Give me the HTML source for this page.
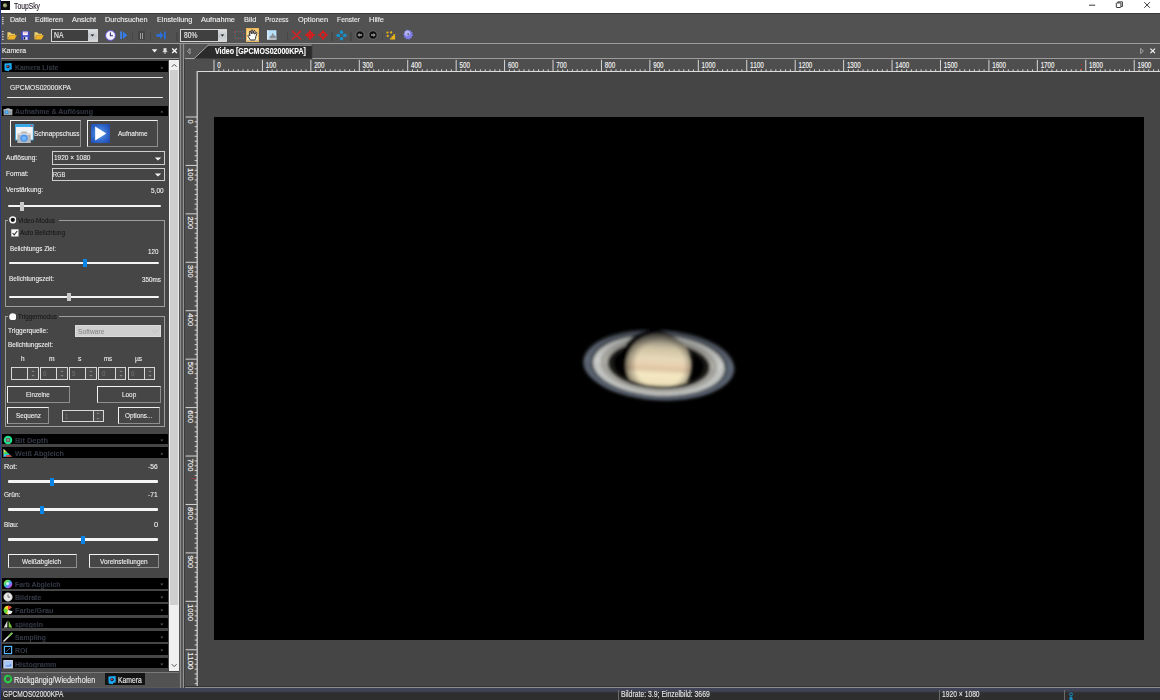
<!DOCTYPE html>
<html lang="de">
<head>
<meta charset="utf-8">
<title>ToupSky</title>
<style>
html,body{margin:0;padding:0;width:1160px;height:700px;overflow:hidden;background:#464646;}
body{font-family:"Liberation Sans",sans-serif;font-size:7.6px;color:#f2f2f2;}
#app{position:relative;width:1160px;height:700px;overflow:hidden;background:#464646;}
#app div,#app svg,#app span{position:absolute;box-sizing:border-box;}
.t{white-space:nowrap;line-height:1;transform-origin:0 50%;font-size:7.6px;-webkit-text-stroke:0.1px currentColor;}
.titlebar{background:#fff;}
.chrome{background:#525252;}
.hl{background:#9c9c9c;}
.sec{background:#000;}
.btn{border:1px solid;border-color:#f2f2f2 #8e8e8e #8e8e8e #f2f2f2;background:#464646;}
.combo{border:1px solid #cfcfcf;background:#454545;}
.track{background:#f4f4f4;border-radius:1px;}
.thumb{background:#0a84e6;}
.thumb.g{background:#c9c9c9;}
.grp{border:1.3px solid #9e9e9e;}
.spin{border:1px solid #d8d8d8;background:#474747;}
.spin i{position:absolute;display:block;right:0;width:9.2px;border-left:1px solid #d8d8d8;background:#4c4c4c;}
.spin i.u{top:0;height:50%;border-bottom:1.4px solid #f2f2f2;}
.spin i.d{bottom:0;height:50%;}
.t.dk{-webkit-text-stroke:0;}

</style>
</head>
<body>
<div id="app">
<div class="titlebar" style="left:0px;top:0px;width:1160px;height:13px;"></div>
<svg style="left:1px;top:1px" width="9" height="9" viewBox="0 0 9 9"><rect width="9" height="9" fill="#0c0c0c"/><circle cx="4" cy="4.4" r="2.1" fill="#8f9a6a"/><circle cx="3.6" cy="4" r="1.1" fill="#b8c090"/></svg>
<span class="t" style="left:14px;top:2.1px;font-size:9px;color:#1c1420;transform:scaleX(0.753);">ToupSky</span>
<svg style="left:1080px;top:0" width="80" height="13" viewBox="0 0 80 13" fill="none" stroke="#222" stroke-width="0.9"><path d="M9 5.2h6.2"/><rect x="36.3" y="2.9" width="4.6" height="4.6" rx="0.6"/><path d="M37.8 2.9v-1h4.6v4.6h-1.2"/><path d="M64.3 2.2l5.6 5.6M69.9 2.2l-5.6 5.6"/></svg>
<div class="chrome" style="left:0px;top:13px;width:1160px;height:31px;"></div>
<div style="left:0px;top:13px;width:1160px;height:0.6px;background:#3a3a3a"></div>
<svg style="left:2px;top:16.8px" width="3" height="10" viewBox="0 0 3 10"><rect x="0" y="0" width="1.6" height="1.1" fill="#d0d0d0"/><rect x="0" y="2.05" width="1.6" height="1.1" fill="#d0d0d0"/><rect x="0" y="4.1" width="1.6" height="1.1" fill="#d0d0d0"/><rect x="0" y="6.15" width="1.6" height="1.1" fill="#d0d0d0"/></svg>
<svg style="left:2px;top:30.8px" width="3" height="10" viewBox="0 0 3 10"><rect x="0" y="0" width="1.6" height="1.1" fill="#d0d0d0"/><rect x="0" y="2.6" width="1.6" height="1.1" fill="#d0d0d0"/><rect x="0" y="5.2" width="1.6" height="1.1" fill="#d0d0d0"/><rect x="0" y="7.8" width="1.6" height="1.1" fill="#d0d0d0"/></svg>
<span class="t" style="left:9.6px;top:16.2px;font-size:8px;transform:scaleX(0.878);">Datei</span>
<span class="t" style="left:35px;top:16.2px;font-size:8px;transform:scaleX(0.887);">Editieren</span>
<span class="t" style="left:72px;top:16.2px;font-size:8px;transform:scaleX(0.915);">Ansicht</span>
<span class="t" style="left:105px;top:16.2px;font-size:8px;transform:scaleX(0.904);">Durchsuchen</span>
<span class="t" style="left:156.6px;top:16.2px;font-size:8px;transform:scaleX(0.904);">Einstellung</span>
<span class="t" style="left:201px;top:16.2px;font-size:8px;transform:scaleX(0.932);">Aufnahme</span>
<span class="t" style="left:243.6px;top:16.2px;font-size:8px;transform:scaleX(0.929);">Bild</span>
<span class="t" style="left:265px;top:16.2px;font-size:8px;transform:scaleX(0.816);">Prozess</span>
<span class="t" style="left:298px;top:16.2px;font-size:8px;transform:scaleX(0.924);">Optionen</span>
<span class="t" style="left:337px;top:16.2px;font-size:8px;transform:scaleX(0.848);">Fenster</span>
<span class="t" style="left:369.4px;top:16.2px;font-size:8px;transform:scaleX(0.937);">Hilfe</span>
<svg style="left:7px;top:31px" width="10" height="9" viewBox="0 0 10 9"><path d="M0.4 8.4V1.6h3l1 1.2h3.6v1.4H2.8L0.4 8.4z" fill="#e8c860"/><path d="M0.6 8.6l2.4-4.4h6.8L7.4 8.6z" fill="#f2b426"/><path d="M0.6 1.8h2.6l0.8 1" stroke="#fff2b0" stroke-width="0.5" fill="none"/></svg>
<svg style="left:21px;top:30.5px" width="9" height="9" viewBox="0 0 9 9"><rect x="0.2" y="0.2" width="8.4" height="8.6" rx="0.6" fill="#3f47c8"/><rect x="1.8" y="0.6" width="5" height="3.6" fill="#f4f4ff"/><rect x="2.4" y="1.6" width="3.6" height="0.6" fill="#e07070"/><rect x="2.4" y="5.8" width="4.2" height="3" fill="#d8dcf4"/><rect x="2.8" y="6.2" width="1.4" height="2.2" fill="#10102a"/></svg>
<svg style="left:33.6px;top:31px" width="10" height="9" viewBox="0 0 10 9"><path d="M0.4 8.4V1.6h3l1 1.2h3.6v1.4H2.8L0.4 8.4z" fill="#e8c860"/><path d="M0.6 8.6l2.4-4.4h6.8L7.4 8.6z" fill="#f2b426"/><path d="M0.6 1.8h2.6l0.8 1" stroke="#fff2b0" stroke-width="0.5" fill="none"/></svg>
<div class="combo" style="left:51px;top:29px;width:46.6px;height:13px;border-color:#d6d6d6;background:#404040"></div><div style="left:88.2px;top:30px;width:8.4px;height:11px;background:linear-gradient(#dcdfe2,#c2c6ca 50%,#d4d7da)"></div><svg style="left:90.2px;top:34px" width="5" height="4" viewBox="0 0 5 4"><path d="M0.6 0.6h3.6L2.4 2.6z" fill="#1a1a1a"/></svg><span class="t" style="left:54px;top:31.4px;font-size:8.4px;transform:scaleX(0.808);">NA</span>
<svg style="left:104.5px;top:30px" width="11" height="11" viewBox="0 0 11 11"><circle cx="5.5" cy="5.5" r="4.9" fill="#f4f2ff" stroke="#5a4ed0" stroke-width="1"/><path d="M5.4 2.6v3.2h2.6" stroke="#3a3470" stroke-width="1.1" fill="none"/></svg>
<svg style="left:119.6px;top:31px" width="8" height="9" viewBox="0 0 8 9"><rect x="0.2" y="0.4" width="1.8" height="7.6" fill="#3a86f0"/><path d="M3 0.4l4.2 3.8L3 8z" fill="#2f7df0"/></svg>
<div style="left:132px;top:31.5px;width:1.2px;height:9px;background:#474747"></div>
<div style="left:137.8px;top:31.4px;width:7.2px;height:8.4px;background:#454545"></div>
<div style="left:139.5px;top:32.8px;width:1.1px;height:5.8px;background:#9c9c9c"></div>
<div style="left:142.4px;top:32.8px;width:1.1px;height:5.8px;background:#9c9c9c"></div>
<div style="left:150px;top:31.5px;width:1.2px;height:9px;background:#474747"></div>
<svg style="left:156px;top:31px" width="10.4" height="9" viewBox="0 0 10.4 9"><path d="M0.4 3h3.6V0.8l3.6 3.6L4 8V5.8H0.4z" fill="#2a6fd8"/><rect x="8" y="0.4" width="1.8" height="8" fill="#2a6fd8"/></svg>
<div style="left:176.4px;top:31.5px;width:1.2px;height:9px;background:#474747"></div>
<div class="combo" style="left:180px;top:29px;width:47px;height:13px;border-color:#d6d6d6;background:#404040"></div><div style="left:217.6px;top:30px;width:8.4px;height:11px;background:linear-gradient(#dcdfe2,#c2c6ca 50%,#d4d7da)"></div><svg style="left:219.6px;top:34px" width="5" height="4" viewBox="0 0 5 4"><path d="M0.6 0.6h3.6L2.4 2.6z" fill="#1a1a1a"/></svg><span class="t" style="left:184px;top:31.4px;font-size:8.4px;transform:scaleX(0.799);">80%</span>
<svg style="left:233.6px;top:31.2px" width="10.4" height="8.4" viewBox="0 0 10.4 8.4"><g fill="none" stroke-width="1.1" stroke-dasharray="1.1 2.2" opacity="0.8"><rect x="0.8" y="0.8" width="8.8" height="6.6" stroke="#c44a3c"/><rect x="0.8" y="0.8" width="8.8" height="6.6" stroke="#1a86b4" stroke-dashoffset="1.65"/></g></svg>
<div style="left:245.8px;top:28.4px;width:13.4px;height:13.4px;background:linear-gradient(#f5c265,#fbe3a0 40%,#fdf1c4 90%,#9aa2b4);border:0.6px solid #f0b85c;"></div>
<svg style="left:247.2px;top:29.4px" width="11" height="11.6" viewBox="0 0 11 11.6"><path d="M3.400 11L1.300 7.700Q0.500 6.400 1.500 6 2.300 5.800 3 6.900L2.300 3.300Q2.200 2.400 2.900 2.300 3.600 2.200 3.800 3L4.300 4.800 4.200 1.800Q4.200 0.900 5 0.900 5.800 0.900 5.800 1.800L6 4.700 6.700 2.200Q6.900 1.400 7.600 1.600 8.300 1.800 8.100 2.600L7.700 5.200 8.800 3.700Q9.300 3.100 9.800 3.500 10.300 3.900 9.900 4.600L8.800 7.600Q8.600 9.600 7.800 11Z" fill="#fff" stroke="#141414" stroke-width="0.850" stroke-linejoin="round"/></svg>
<svg style="left:267px;top:30px" width="10" height="10" viewBox="0 0 10 10"><rect x="0.2" y="0.2" width="9.2" height="9.2" fill="#b9e0fb"/><path d="M2.6 9.2V6.4l2-1.2 1.2-2.8 1 2.6 2 1.2v3z" fill="#8a9098"/><rect x="0.2" y="8.4" width="9.2" height="1.2" fill="#d8dde0"/><rect x="0.2" y="0.2" width="1.2" height="9.2" fill="#dff1ff"/></svg>
<div style="left:287px;top:31.5px;width:1.2px;height:9px;background:#474747"></div>
<svg style="left:291px;top:30.2px" width="11" height="10" viewBox="0 0 11 10"><path d="M1.600 1.400l7.800 7.600M9.400 1.400l-7.800 7.600" stroke="#d22424" stroke-width="1.700" stroke-linecap="round"/></svg>
<svg style="left:304.6px;top:30.4px" width="10" height="10" viewBox="0 0 10 10"><g fill="none" stroke="#e21a1a"><circle cx="5" cy="5" r="2.700" stroke-width="1.200"/><path d="M0.200 5h9.600M5 0.200v9.600" stroke-width="1.300"/></g><path d="M5 0L6 1.800H4zM5 10L6 8.200H4zM0 5L1.800 4v2zM10 5L8.200 4v2z" fill="#e21a1a"/></svg>
<svg style="left:318.2px;top:30.4px" width="10" height="10" viewBox="0 0 10 10"><g fill="none" stroke="#e21a1a"><circle cx="5" cy="5" r="2.700" stroke-width="1.200"/><path d="M0.200 5h3.400M6.400 5h3.400M5 0.600v3M5 6.400v3" stroke-width="1.400"/></g><path d="M5 0.200L6.200 2H3.800zM5 9.800L6.200 8H3.800z" fill="#e21a1a"/></svg>
<div style="left:331.4px;top:31.5px;width:1.2px;height:9px;background:#474747"></div>
<svg style="left:336px;top:29.8px" width="11" height="11" viewBox="0 0 11 11"><g fill="#1592cc"><ellipse cx="5.500" cy="2.200" rx="1.700" ry="1.900"/><ellipse cx="5.500" cy="8.600" rx="1.700" ry="1.900"/><ellipse cx="2.200" cy="5.400" rx="1.900" ry="1.700"/><ellipse cx="8.800" cy="5.400" rx="1.900" ry="1.700"/></g></svg>
<div style="left:350.4px;top:31.5px;width:1.2px;height:9px;background:#474747"></div>
<svg style="left:354.6px;top:30.4px" width="10" height="10" viewBox="0 0 10 10"><circle cx="5" cy="5" r="4.200" fill="#0e0e0e" stroke="#7c7c7c" stroke-width="0.800"/><path d="M2.400 5l2.200-1.900v1.200h2.400v1.400H4.600v1.200z" fill="#9a9a9a"/></svg>
<svg style="left:368px;top:30.4px" width="10" height="10" viewBox="0 0 10 10"><circle cx="5" cy="5" r="4.200" fill="#0e0e0e" stroke="#7c7c7c" stroke-width="0.800"/><path d="M7.600 5L5.400 3.100v1.200H3v1.400h2.400v1.200z" fill="#9a9a9a"/></svg>
<div style="left:382px;top:31.5px;width:1.2px;height:9px;background:#474747"></div>
<svg style="left:386px;top:31.2px" width="10" height="9" viewBox="0 0 10 9"><g fill="#e6b414"><circle cx="1.500" cy="1.600" r="1.100"/><circle cx="5.100" cy="1.400" r="1.100"/><circle cx="1.700" cy="4.900" r="1.100"/><path d="M4.200 8.400V6.800h1.500V5h1.600V3.200h1.800v5.200z"/></g></svg>
<svg style="left:403.4px;top:29.4px" width="10.4" height="10.4" viewBox="0 0 10.4 10.4"><g transform="scale(0.945)"><path d="M5.500 0.400l1.100 1.500 1.800-.6.200 1.900 1.800.5-.8 1.700 1.200 1.400-1.600 1 .2 1.800-1.900.1-.8 1.700-1.600-1-1.700.8-.6-1.800-1.900-.3.5-1.800L0.200 5.600l1.500-1.200-.5-1.800 1.900-.3.600-1.800 1.700.8z" fill="#7f7de8"/><circle cx="4.600" cy="4.400" r="2.900" fill="#c4c4fa" opacity="0.750"/><circle cx="5.500" cy="5.500" r="1" fill="#66647a"/></g></svg>
<div class="hl" style="left:0px;top:43px;width:1160px;height:1px;"></div>
<div style="left:0px;top:44px;width:180px;height:14px;background:#464646"></div>
<span class="t" style="left:2px;top:46.7px;font-size:8px;transform:scaleX(0.857);">Kamera</span>
<svg style="left:150px;top:46px" width="30" height="10" viewBox="0 0 30 10"><path d="M1.800 3.300h5.600l-2.800 3.300z" fill="#f6f6f6"/><path d="M13.500 2.200h3v3.400h-3z" fill="#e4e4e4"/><path d="M12.700 5.700h4.600M15 5.700v2.300" fill="none" stroke="#e8e8e8" stroke-width="0.900"/><path d="M22.200 2.600l4.600 4.400M26.800 2.600l-4.600 4.400" stroke="#f8f8f8" stroke-width="1.400"/></svg>
<div class="hl" style="left:0px;top:58px;width:181px;height:1px;"></div>
<div style="left:1px;top:59px;width:179px;height:613px;background:#464646"></div>
<div class="sec" style="left:2px;top:61px;width:165.8px;height:11px;"></div><svg style="left:3.4px;top:61.8px" width="10" height="10" viewBox="0 0 10 10"><path d="M1.4 1.6L8.6 1l.2 6.4-2.400.4-.6 1.400-4.200-.6z" fill="#1ea8f2"/><circle cx="5" cy="4.600" r="1.700" fill="#1a1a2a"/><circle cx="4.800" cy="4.400" r="0.800" fill="#e04848"/></svg><span class="t" style="left:15px;top:64px;font-size:7.8px;color:#343844;font-weight:bold;transform:scaleX(0.886);">Kamera Liste</span><svg style="left:160px;top:65.9px" width="4" height="3" viewBox="0 0 4 3"><path d="M0.4 2.4h3L1.9 0.6z" fill="#5a5a5a"/></svg>
<div class="track" style="left:7px;top:76.8px;width:156px;height:1.4px;background:#e8e8e8"></div>
<span class="t" style="left:10px;top:84.1px;font-size:7.8px;color:#ececec;transform:scaleX(0.855);">GPCMOS02000KPA</span>
<div class="track" style="left:7px;top:96.8px;width:156px;height:1.4px;background:#e8e8e8"></div>
<div class="sec" style="left:2px;top:105.6px;width:165.8px;height:10.4px;"></div><svg style="left:3.4px;top:106.4px" width="10" height="10" viewBox="0 0 10 10"><path d="M0.6 3.400h2l.8-1.200h3.200l.8 1.200h2v5.800H0.600z" fill="#9aa0a6"/><rect x="0.600" y="3.400" width="8.800" height="1" fill="#c8ccd0"/><circle cx="3.600" cy="6.200" r="1.900" fill="#2a90e0"/><circle cx="3.600" cy="6.200" r="0.900" fill="#7cc4f8"/></svg><span class="t" style="left:15px;top:108.3px;font-size:7.8px;color:#343844;font-weight:bold;transform:scaleX(0.903);">Aufnahme &amp; Auflösung</span><svg style="left:160px;top:110.2px" width="4" height="3" viewBox="0 0 4 3"><path d="M0.4 2.4h3L1.9 0.6z" fill="#5a5a5a"/></svg>
<div class="btn" style="left:10px;top:120px;width:71px;height:27.4px;"></div>
<svg style="left:14.6px;top:124px" width="19" height="20" viewBox="0 0 19 20"><rect x="0.400" y="0.400" width="17.800" height="15.600" fill="#f4f4f4" stroke="#38a8e8" stroke-width="0.800"/><rect x="0.400" y="0.400" width="17.800" height="2.600" fill="#38a8e8"/><rect x="15.800" y="1" width="1.600" height="1.400" fill="#e84040"/><path d="M2.400 9.400h3l1.200-1.800h5l1.200 1.800h3v9.600H2.400z" fill="#b4b8bc"/><rect x="2.400" y="9.400" width="13.400" height="1.600" fill="#d8dadc"/><circle cx="9" cy="14.200" r="3.600" fill="#4a98f0"/><circle cx="9" cy="14.200" r="2" fill="#78b8ff"/></svg>
<span class="t" style="left:34px;top:130.3px;font-size:7.8px;transform:scaleX(0.828);">Schnappschuss</span>
<div class="btn" style="left:86.6px;top:120px;width:71.8px;height:27.4px;"></div>
<svg style="left:91px;top:124.4px" width="19.4" height="19" viewBox="0 0 19.4 19"><defs><radialGradient id="pg" cx="0.450" cy="0.500" r="0.750"><stop offset="0" stop-color="#5aa0ee"/><stop offset="0.600" stop-color="#2c62c8"/><stop offset="1" stop-color="#1c44a0"/></radialGradient></defs><rect width="19.400" height="19" fill="url(#pg)"/><path d="M4.200 2.600L15.400 9.500 4.200 16.400z" fill="#fff"/></svg>
<span class="t" style="left:118.4px;top:130.3px;font-size:7.8px;transform:scaleX(0.833);">Aufnahme</span>
<span class="t" style="left:6px;top:153.7px;font-size:7.8px;transform:scaleX(0.846);">Auflösung:</span>
<div class="combo" style="left:52px;top:151.2px;width:113px;height:13.6px;"></div><span class="t" style="left:54px;top:154.4px;font-size:7.8px;transform:scaleX(0.835);">1920 × 1080</span><svg style="left:154px;top:156.6px" width="8" height="4" viewBox="0 0 8 4"><path d="M0.800 0.400h6.400L4 3.600z" fill="#f6f6f6"/></svg>
<span class="t" style="left:6px;top:169.9px;font-size:7.8px;transform:scaleX(0.841);">Format:</span>
<div class="combo" style="left:52px;top:168px;width:113px;height:13.4px;"></div><span class="t" style="left:53px;top:171.1px;font-size:7.8px;transform:scaleX(0.722);">RGB</span><svg style="left:154px;top:173.3px" width="8" height="4" viewBox="0 0 8 4"><path d="M0.800 0.400h6.400L4 3.600z" fill="#f6f6f6"/></svg>
<span class="t" style="left:6px;top:185.9px;font-size:7.8px;transform:scaleX(0.845);">Verstärkung:</span>
<span class="t" style="left:151.4px;top:186.5px;font-size:7.8px;transform:scaleX(0.830);">5,00</span>
<div class="track" style="left:8px;top:204.7px;width:153.4px;height:2.6px;"></div><div class="thumb g" style="left:20px;top:201.5px;width:4px;height:9px;"></div>
<div class="grp" style="left:5px;top:220px;width:160.4px;height:86.8px;"></div>
<div style="left:8px;top:216px;width:50.6px;height:8px;background:#464646"></div>
<svg style="left:8.8px;top:216.2px" width="7.6" height="7.6" viewBox="0 0 7.6 7.6"><circle cx="3.8" cy="3.8" r="2.9" fill="#111" stroke="#f6f6f6" stroke-width="1.5"/></svg>
<span class="t dk" style="left:18.2px;top:216.5px;font-size:7.8px;color:#101010;transform:scaleX(0.803);">Video-Modus</span>
<svg style="left:10.6px;top:228.6px" width="8" height="8" viewBox="0 0 8 8"><rect x="0.300" y="0.300" width="7.200" height="7.200" fill="#f8f8f8"/><path d="M1.600 4l1.600 1.800 3-3.800" stroke="#333" stroke-width="1.100" fill="none"/></svg>
<span class="t dk" style="left:20px;top:228.7px;font-size:7.8px;color:#101010;transform:scaleX(0.824);">Auto Belichtung</span>
<span class="t" style="left:10px;top:244.9px;font-size:7.8px;transform:scaleX(0.804);">Belichtungs Ziel:</span>
<span class="t" style="left:147.6px;top:247.5px;font-size:7.8px;transform:scaleX(0.799);">120</span>
<div class="track" style="left:9.4px;top:261.5px;width:149.6px;height:2.6px;"></div><div class="thumb" style="left:83.2px;top:258.8px;width:4px;height:8px;"></div>
<span class="t" style="left:9px;top:274.7px;font-size:7.8px;transform:scaleX(0.824);">Belichtungszeit:</span>
<span class="t" style="left:142px;top:275.5px;font-size:7.8px;transform:scaleX(0.812);">350ms</span>
<div class="track" style="left:9.4px;top:295.5px;width:149.6px;height:2.6px;"></div><div class="thumb g" style="left:67px;top:292.6px;width:4px;height:8.4px;"></div>
<div class="grp" style="left:5px;top:316.4px;width:160.4px;height:110.6px;"></div>
<div style="left:8px;top:312px;width:51px;height:8px;background:#464646"></div>
<svg style="left:8.8px;top:312.6px" width="7.6" height="7.6" viewBox="0 0 7.6 7.6"><circle cx="3.8" cy="3.8" r="3.6" fill="#fbfbfb"/></svg>
<span class="t dk" style="left:18.2px;top:312.9px;font-size:7.8px;color:#101010;transform:scaleX(0.812);">Triggermodus</span>
<span class="t" style="left:8px;top:326.7px;font-size:7.8px;transform:scaleX(0.844);">Triggerquelle:</span>
<div style="left:75.4px;top:325px;width:85.6px;height:12.4px;background:#cfcfcf;border:1px solid #dcdcdc"></div>
<span class="t" style="left:77.6px;top:327.5px;font-size:7.8px;color:#8a8a8a;transform:scaleX(0.858);">Software</span>
<svg style="left:152.4px;top:328.6px" width="6.4" height="5" viewBox="0 0 6.4 5"><path d="M0.600 1l2.600 2.800L5.800 1" stroke="#bcbcbc" stroke-width="0.900" fill="none"/></svg>
<span class="t" style="left:8px;top:340.9px;font-size:7.8px;transform:scaleX(0.824);">Belichtungszeit:</span>
<span class="t" style="left:21.2px;top:354.5px;font-size:7.8px;transform:scaleX(0.829);">h</span>
<span class="t" style="left:48.6px;top:354.5px;font-size:7.8px;transform:scaleX(0.862);">m</span>
<span class="t" style="left:77.5px;top:354.5px;font-size:7.8px;transform:scaleX(0.870);">s</span>
<span class="t" style="left:103.9px;top:354.5px;font-size:7.8px;transform:scaleX(0.788);">ms</span>
<span class="t" style="left:134.8px;top:354.5px;font-size:7.8px;transform:scaleX(0.857);">µs</span>
<div class="spin" style="left:11px;top:367.4px;width:27.6px;height:12.4px;"><i class="u"></i><i class="d"></i></div><svg style="left:31.2px;top:369.8px" width="4" height="2" viewBox="0 0 4 2"><path d="M0.400 1.800h3.200L2 0.400z" fill="#9a9a9a"/></svg><svg style="left:31.2px;top:375.4px" width="4" height="2" viewBox="0 0 4 2"><path d="M0.400 0.200h3.200L2 1.600z" fill="#9a9a9a"/></svg>
<div class="spin" style="left:40px;top:367.4px;width:27.6px;height:12.4px;"><i class="u"></i><i class="d"></i></div><svg style="left:60.2px;top:369.8px" width="4" height="2" viewBox="0 0 4 2"><path d="M0.400 1.800h3.200L2 0.400z" fill="#9a9a9a"/></svg><svg style="left:60.2px;top:375.4px" width="4" height="2" viewBox="0 0 4 2"><path d="M0.400 0.200h3.200L2 1.600z" fill="#9a9a9a"/></svg><span class="t" style="left:43.2px;top:370.2px;font-size:7.2px;color:#707070;transform:scaleX(0.850);">0</span>
<div class="spin" style="left:69px;top:367.4px;width:27.6px;height:12.4px;"><i class="u"></i><i class="d"></i></div><svg style="left:89.2px;top:369.8px" width="4" height="2" viewBox="0 0 4 2"><path d="M0.400 1.800h3.200L2 0.400z" fill="#9a9a9a"/></svg><svg style="left:89.2px;top:375.4px" width="4" height="2" viewBox="0 0 4 2"><path d="M0.400 0.200h3.200L2 1.600z" fill="#9a9a9a"/></svg><span class="t" style="left:72.2px;top:370.2px;font-size:7.2px;color:#707070;transform:scaleX(0.850);">5</span>
<div class="spin" style="left:98.4px;top:367.4px;width:27.6px;height:12.4px;"><i class="u"></i><i class="d"></i></div><svg style="left:118.6px;top:369.8px" width="4" height="2" viewBox="0 0 4 2"><path d="M0.400 1.800h3.200L2 0.400z" fill="#9a9a9a"/></svg><svg style="left:118.6px;top:375.4px" width="4" height="2" viewBox="0 0 4 2"><path d="M0.400 0.200h3.200L2 1.600z" fill="#9a9a9a"/></svg><span class="t" style="left:101.6px;top:370.2px;font-size:7.2px;color:#707070;transform:scaleX(0.850);">0</span>
<div class="spin" style="left:127.8px;top:367.4px;width:27.6px;height:12.4px;"><i class="u"></i><i class="d"></i></div><svg style="left:148px;top:369.8px" width="4" height="2" viewBox="0 0 4 2"><path d="M0.400 1.800h3.200L2 0.400z" fill="#9a9a9a"/></svg><svg style="left:148px;top:375.4px" width="4" height="2" viewBox="0 0 4 2"><path d="M0.400 0.200h3.200L2 1.600z" fill="#9a9a9a"/></svg><span class="t" style="left:131px;top:370.2px;font-size:7.2px;color:#707070;transform:scaleX(0.850);">0</span>
<div class="btn" style="left:6.6px;top:386px;width:63px;height:16.8px;"></div>
<span class="t" style="left:26.4px;top:390.9px;font-size:7.8px;transform:scaleX(0.789);">Einzelne</span>
<div class="btn" style="left:97px;top:386px;width:63.6px;height:16.8px;"></div>
<span class="t" style="left:122.2px;top:390.9px;font-size:7.8px;transform:scaleX(0.818);">Loop</span>
<div class="btn" style="left:6.6px;top:407px;width:42.2px;height:16.8px;"></div>
<span class="t" style="left:16px;top:411.9px;font-size:7.8px;transform:scaleX(0.812);">Sequenz</span>
<div class="spin" style="left:62px;top:410px;width:41.8px;height:12.4px;"><i class="u"></i><i class="d"></i></div><svg style="left:96.4px;top:412.4px" width="4" height="2" viewBox="0 0 4 2"><path d="M0.400 1.800h3.200L2 0.400z" fill="#9a9a9a"/></svg><svg style="left:96.4px;top:418px" width="4" height="2" viewBox="0 0 4 2"><path d="M0.400 0.200h3.200L2 1.600z" fill="#9a9a9a"/></svg><span class="t" style="left:65.2px;top:412.8px;font-size:7.2px;color:#707070;transform:scaleX(0.850);">1</span>
<div class="btn" style="left:118px;top:407px;width:42.2px;height:16.8px;"></div>
<span class="t" style="left:125.2px;top:411.9px;font-size:7.8px;transform:scaleX(0.821);">Options...</span>
<div class="sec" style="left:2px;top:434px;width:165.8px;height:10.4px;"></div><svg style="left:3.4px;top:434.8px" width="10" height="10" viewBox="0 0 10 10"><circle cx="5" cy="5" r="4.300" fill="#20e088"/><rect x="3" y="3" width="4" height="4" fill="#6a6a6a"/><rect x="3.800" y="3.800" width="2.400" height="2.400" fill="#8a8a8a"/></svg><span class="t" style="left:15px;top:436.7px;font-size:7.8px;color:#343844;font-weight:bold;transform:scaleX(0.952);">Bit Depth</span><svg style="left:160px;top:438.6px" width="4" height="3" viewBox="0 0 4 3"><path d="M0.4 0.6h3L1.9 2.4z" fill="#5a5a5a"/></svg>
<div class="sec" style="left:2px;top:447.2px;width:165.8px;height:10.6px;"></div><svg style="left:3.4px;top:448px" width="10" height="10" viewBox="0 0 10 10"><path d="M0.800 1.200L9 8.800H0.800z" fill="#20c8f0"/><path d="M0.800 1.200l3 2.800H0.800z" fill="#f4e020"/><path d="M0.800 4l3.200.200 2 1.800H0.800z" fill="#40d840"/><path d="M3.400 7.200L7 7l2 1.800H2.400z" fill="#f03020"/><path d="M0.800 1v8" stroke="#eee" stroke-width="0.500"/></svg><span class="t" style="left:15px;top:450px;font-size:7.8px;color:#343844;font-weight:bold;transform:scaleX(0.919);">Weiß Abgleich</span><svg style="left:160px;top:451.9px" width="4" height="3" viewBox="0 0 4 3"><path d="M0.4 2.4h3L1.9 0.6z" fill="#5a5a5a"/></svg>
<span class="t" style="left:4px;top:462.5px;font-size:7.8px;transform:scaleX(0.936);">Rot:</span>
<span class="t" style="left:148.4px;top:462.5px;font-size:7.8px;transform:scaleX(0.851);">-56</span>
<div class="track" style="left:8px;top:480.3px;width:150.2px;height:2.6px;"></div><div class="thumb" style="left:49.6px;top:477.6px;width:4px;height:8px;"></div>
<span class="t" style="left:4px;top:491.3px;font-size:7.8px;transform:scaleX(0.841);">Grün:</span>
<span class="t" style="left:148.4px;top:491.3px;font-size:7.8px;transform:scaleX(0.851);">-71</span>
<div class="track" style="left:8px;top:508.3px;width:150.2px;height:2.6px;"></div><div class="thumb" style="left:40.2px;top:505.6px;width:4px;height:8px;"></div>
<span class="t" style="left:4px;top:520.5px;font-size:7.8px;transform:scaleX(0.821);">Blau:</span>
<span class="t" style="left:153.8px;top:520.5px;font-size:7.8px;transform:scaleX(0.967);">0</span>
<div class="track" style="left:8px;top:538.3px;width:150.2px;height:2.6px;"></div><div class="thumb" style="left:81px;top:535.6px;width:4px;height:8px;"></div>
<div class="btn" style="left:8px;top:554px;width:68.8px;height:13.8px;"></div>
<span class="t" style="left:22px;top:557.5px;font-size:7.8px;transform:scaleX(0.828);">Weißabgleich</span>
<div class="btn" style="left:89.4px;top:554px;width:69.8px;height:13.8px;"></div>
<span class="t" style="left:100.4px;top:557.5px;font-size:7.8px;transform:scaleX(0.826);">Voreinstellungen</span>
<div class="sec" style="left:2px;top:578px;width:165.8px;height:10.6px;"></div><svg style="left:3.4px;top:578.8px" width="10" height="10" viewBox="0 0 10 10"><defs><linearGradient id="rb1" x1="0" y1="0" x2="1" y2="1"><stop offset="0" stop-color="#ffe040"/><stop offset="0.300" stop-color="#50e060"/><stop offset="0.550" stop-color="#40a0ff"/><stop offset="0.800" stop-color="#c040e0"/><stop offset="1" stop-color="#ff4040"/></linearGradient></defs><circle cx="5" cy="5" r="4.300" fill="url(#rb1)"/><circle cx="4.600" cy="4.600" r="1.600" fill="#fff" opacity="0.700"/></svg><span class="t" style="left:15px;top:580.8px;font-size:7.8px;color:#343844;font-weight:bold;transform:scaleX(0.878);">Farb Abgleich</span><svg style="left:160px;top:582.7px" width="4" height="3" viewBox="0 0 4 3"><path d="M0.4 0.6h3L1.9 2.4z" fill="#5a5a5a"/></svg>
<div class="sec" style="left:2px;top:591.2px;width:165.8px;height:10.6px;"></div><svg style="left:3.4px;top:592px" width="10" height="10" viewBox="0 0 10 10"><circle cx="5" cy="5" r="4.300" fill="#e8e8e8" stroke="#b0b0b0" stroke-width="0.600"/><path d="M5 2.400v2.800h2" stroke="#707070" stroke-width="0.900" fill="none"/></svg><span class="t" style="left:15px;top:594px;font-size:7.8px;color:#343844;font-weight:bold;transform:scaleX(0.909);">Bildrate</span><svg style="left:160px;top:595.9px" width="4" height="3" viewBox="0 0 4 3"><path d="M0.4 0.6h3L1.9 2.4z" fill="#5a5a5a"/></svg>
<div class="sec" style="left:2px;top:604.4px;width:165.8px;height:10.6px;"></div><svg style="left:3.4px;top:605.2px" width="10" height="10" viewBox="0 0 10 10"><path d="M5 5L8.600 2.600A4.300 4.300 0 1 0 8.800 7z" fill="#f4d820"/><path d="M5 5L1.200 3A4.300 4.300 0 0 0 3 8.800z" fill="#60d840"/><path d="M5 5L5 0.700A4.300 4.300 0 0 1 8.600 2.600z" fill="#f04040"/><path d="M5 5l4.600 1.200-1.400 2.600-3.600.600z" fill="#f0f0f0"/></svg><span class="t" style="left:15px;top:607.2px;font-size:7.8px;color:#343844;font-weight:bold;transform:scaleX(0.923);">Farbe/Grau</span><svg style="left:160px;top:609.1px" width="4" height="3" viewBox="0 0 4 3"><path d="M0.4 0.6h3L1.9 2.4z" fill="#5a5a5a"/></svg>
<div class="sec" style="left:2px;top:617.8px;width:165.8px;height:10.6px;"></div><svg style="left:3.4px;top:618.6px" width="10" height="10" viewBox="0 0 10 10"><path d="M4.400 1.600V8.400H0.800z" fill="#d8d8d8"/><path d="M5.600 1.600V8.400H9.200z" fill="#7cc83c"/></svg><span class="t" style="left:15px;top:620.6px;font-size:7.8px;color:#343844;font-weight:bold;transform:scaleX(0.885);">spiegeln</span><svg style="left:160px;top:622.5px" width="4" height="3" viewBox="0 0 4 3"><path d="M0.4 0.6h3L1.9 2.4z" fill="#5a5a5a"/></svg>
<div class="sec" style="left:2px;top:631px;width:165.8px;height:10.6px;"></div><svg style="left:3.4px;top:631.8px" width="10" height="10" viewBox="0 0 10 10"><path d="M1 9L8.800 1.400" stroke="#e8e8e8" stroke-width="1.500" stroke-linecap="round"/><path d="M6 4.200L8.800 1.400" stroke="#6cc040" stroke-width="1.500" stroke-linecap="round"/></svg><span class="t" style="left:15px;top:633.8px;font-size:7.8px;color:#343844;font-weight:bold;transform:scaleX(0.883);">Sampling</span><svg style="left:160px;top:635.7px" width="4" height="3" viewBox="0 0 4 3"><path d="M0.4 0.6h3L1.9 2.4z" fill="#5a5a5a"/></svg>
<div class="sec" style="left:2px;top:644.4px;width:165.8px;height:10.6px;"></div><svg style="left:3.4px;top:645.2px" width="10" height="10" viewBox="0 0 10 10"><rect x="1.400" y="1.400" width="7.200" height="7.200" fill="none" stroke="#5ab4f4" stroke-width="1.200"/><path d="M2.800 7.200l4.400-4.400" stroke="#3a7ab8" stroke-width="0.900"/></svg><span class="t" style="left:15px;top:647.2px;font-size:7.8px;color:#343844;font-weight:bold;transform:scaleX(0.894);">ROI</span><svg style="left:160px;top:649.1px" width="4" height="3" viewBox="0 0 4 3"><path d="M0.4 0.6h3L1.9 2.4z" fill="#5a5a5a"/></svg>
<div class="sec" style="left:2px;top:657.8px;width:165.8px;height:10.6px;"></div><svg style="left:3.4px;top:658.6px" width="10" height="10" viewBox="0 0 10 10"><rect x="0.800" y="1.400" width="8.600" height="7.600" fill="#a8c8f8" stroke="#e0e8f8" stroke-width="0.800"/><path d="M2 7.600l2-1.600 1.600.600L8.200 4.400V7.600z" fill="#6a94e0"/></svg><span class="t" style="left:15px;top:660.6px;font-size:7.8px;color:#343844;font-weight:bold;transform:scaleX(0.910);">Histogramm</span><svg style="left:160px;top:662.5px" width="4" height="3" viewBox="0 0 4 3"><path d="M0.4 0.6h3L1.9 2.4z" fill="#5a5a5a"/></svg>
<div style="left:168.8px;top:60px;width:10.2px;height:611.4px;background:#f0f0f0"></div>
<div style="left:168.8px;top:70.4px;width:10.2px;height:534.6px;background:linear-gradient(90deg,#f2f2f2 0,#f2f2f2 1px,#cfcfcf 1.4px,#cfcfcf 9px,#ebebeb 9.3px,#ebebeb 100%)"></div>
<svg style="left:171px;top:63px" width="6.4" height="5" viewBox="0 0 6.4 5"><path d="M0.800 3.800L3.200 1.400l2.400 2.400" stroke="#505050" stroke-width="1" fill="none"/></svg>
<svg style="left:171px;top:663.4px" width="6.4" height="5" viewBox="0 0 6.4 5"><path d="M0.800 1.200L3.200 3.600l2.400-2.400" stroke="#505050" stroke-width="1" fill="none"/></svg>
<div class="chrome" style="left:0px;top:672px;width:180px;height:16px;"></div>
<div style="left:0px;top:671.6px;width:180px;height:0.8px;background:#7a7a7a"></div>
<svg style="left:3px;top:674.4px" width="10" height="10" viewBox="0 0 10 10"><path d="M5 0.800a4.200 4.200 0 1 0 4.200 4.200h-2a2.200 2.200 0 1 1-2.200-2.200z" fill="#28d048"/><path d="M5 0.800a4.200 4.200 0 0 1 4.200 4.200h-2A2.200 2.200 0 0 0 5 2.800z" fill="#20b840"/></svg>
<span class="t" style="left:14px;top:675.8px;font-size:8.4px;color:#eeeeee;transform:scaleX(0.870);">Rückgängig/Wiederholen</span>
<div style="left:105px;top:673px;width:40px;height:12.4px;background:#141414"></div>
<svg style="left:107px;top:674.6px" width="9" height="10" viewBox="0 0 9 10"><path d="M1.4 1.6L8.6 1l.2 6.4-2.400.4-.6 1.400-4.200-.6z" fill="#1ea8f2"/><circle cx="5" cy="4.600" r="1.700" fill="#1a1a2a"/><circle cx="4.800" cy="4.400" r="0.800" fill="#e04848"/></svg>
<span class="t" style="left:117.6px;top:675.8px;font-size:8.4px;color:#f4f4f4;transform:scaleX(0.812);">Kamera</span>
<div style="left:184px;top:44px;width:976px;height:15px;background:#525252"></div>
<div class="hl" style="left:312px;top:58px;width:848px;height:1px;"></div>
<svg style="left:184px;top:44px" width="130" height="15" viewBox="0 0 130 15"><path d="M10 14.600L24.600 0.600H128v14z" fill="#2b2b2b"/><path d="M24.600 0.400H128v1.400H23.400z" fill="#9a9a9a"/><path d="M0.500 0v14.500H10.200L24.600 0.800" fill="none" stroke="#b8b8b8" stroke-width="0.900"/><path d="M128 0.600v14" stroke="#3a3a3a" stroke-width="0.800"/><path d="M6 4.600v5.200L3.400 7.200z" fill="none" stroke="#c8c8c8" stroke-width="0.700"/></svg>
<span class="t" style="left:215px;top:47px;font-size:8.4px;color:#ffffff;font-weight:bold;transform:scaleX(0.841);">Video [GPCMOS02000KPA]</span>
<svg style="left:1136px;top:46px" width="22" height="10" viewBox="0 0 22 10"><path d="M4.600 2.400v5.200l2.800-2.600z" fill="none" stroke="#c8c8c8" stroke-width="0.700"/><path d="M14.400 2.600l4.600 4.600M19 2.600L14.400 7.200" stroke="#f4f4f4" stroke-width="1.200"/></svg>
<div style="left:184px;top:59px;width:976px;height:629px;background:#454545"></div>
<svg style="left:184px;top:59px" width="976" height="629" viewBox="0 0 976 629" class="ruler"><rect x="0" y="0" width="976" height="13" fill="#4e4e4e"/><rect x="0" y="0" width="13.500" height="629" fill="#4e4e4e"/><path d="M30.00 0.800V12.600M78.43 0.800V12.600M126.86 0.800V12.600M175.30 0.800V12.600M223.73 0.800V12.600M272.16 0.800V12.600M320.59 0.800V12.600M369.03 0.800V12.600M417.46 0.800V12.600M465.89 0.800V12.600M514.32 0.800V12.600M562.76 0.800V12.600M611.19 0.800V12.600M659.62 0.800V12.600M708.05 0.800V12.600M756.48 0.800V12.600M804.92 0.800V12.600M853.35 0.800V12.600M901.78 0.800V12.600M950.21 0.800V12.600" stroke="#d6d6d6" stroke-width="1" fill="none"/><path d="M34.84 10.3V12.6M39.69 10.3V12.6M44.53 10.3V12.6M49.37 10.3V12.6M54.22 10.3V12.6M59.06 10.3V12.6M63.90 10.3V12.6M68.75 10.3V12.6M73.59 10.3V12.6M83.28 10.3V12.6M88.12 10.3V12.6M92.96 10.3V12.6M97.81 10.3V12.6M102.65 10.3V12.6M107.49 10.3V12.6M112.33 10.3V12.6M117.18 10.3V12.6M122.02 10.3V12.6M131.71 10.3V12.6M136.55 10.3V12.6M141.39 10.3V12.6M146.24 10.3V12.6M151.08 10.3V12.6M155.92 10.3V12.6M160.77 10.3V12.6M165.61 10.3V12.6M170.45 10.3V12.6M180.14 10.3V12.6M184.98 10.3V12.6M189.83 10.3V12.6M194.67 10.3V12.6M199.51 10.3V12.6M204.36 10.3V12.6M209.20 10.3V12.6M214.04 10.3V12.6M218.89 10.3V12.6M228.57 10.3V12.6M233.42 10.3V12.6M238.26 10.3V12.6M243.10 10.3V12.6M247.95 10.3V12.6M252.79 10.3V12.6M257.63 10.3V12.6M262.48 10.3V12.6M267.32 10.3V12.6M277.00 10.3V12.6M281.85 10.3V12.6M286.69 10.3V12.6M291.53 10.3V12.6M296.38 10.3V12.6M301.22 10.3V12.6M306.06 10.3V12.6M310.91 10.3V12.6M315.75 10.3V12.6M325.44 10.3V12.6M330.28 10.3V12.6M335.12 10.3V12.6M339.97 10.3V12.6M344.81 10.3V12.6M349.65 10.3V12.6M354.50 10.3V12.6M359.34 10.3V12.6M364.18 10.3V12.6M373.87 10.3V12.6M378.71 10.3V12.6M383.56 10.3V12.6M388.40 10.3V12.6M393.24 10.3V12.6M398.09 10.3V12.6M402.93 10.3V12.6M407.77 10.3V12.6M412.62 10.3V12.6M422.30 10.3V12.6M427.14 10.3V12.6M431.99 10.3V12.6M436.83 10.3V12.6M441.67 10.3V12.6M446.52 10.3V12.6M451.36 10.3V12.6M456.20 10.3V12.6M461.05 10.3V12.6M470.73 10.3V12.6M475.58 10.3V12.6M480.42 10.3V12.6M485.26 10.3V12.6M490.11 10.3V12.6M494.95 10.3V12.6M499.79 10.3V12.6M504.64 10.3V12.6M509.48 10.3V12.6M519.17 10.3V12.6M524.01 10.3V12.6M528.85 10.3V12.6M533.70 10.3V12.6M538.54 10.3V12.6M543.38 10.3V12.6M548.23 10.3V12.6M553.07 10.3V12.6M557.91 10.3V12.6M567.60 10.3V12.6M572.44 10.3V12.6M577.28 10.3V12.6M582.13 10.3V12.6M586.97 10.3V12.6M591.81 10.3V12.6M596.66 10.3V12.6M601.50 10.3V12.6M606.34 10.3V12.6M616.03 10.3V12.6M620.87 10.3V12.6M625.72 10.3V12.6M630.56 10.3V12.6M635.40 10.3V12.6M640.25 10.3V12.6M645.09 10.3V12.6M649.93 10.3V12.6M654.78 10.3V12.6M664.46 10.3V12.6M669.31 10.3V12.6M674.15 10.3V12.6M678.99 10.3V12.6M683.84 10.3V12.6M688.68 10.3V12.6M693.52 10.3V12.6M698.37 10.3V12.6M703.21 10.3V12.6M712.90 10.3V12.6M717.74 10.3V12.6M722.58 10.3V12.6M727.42 10.3V12.6M732.27 10.3V12.6M737.11 10.3V12.6M741.95 10.3V12.6M746.80 10.3V12.6M751.64 10.3V12.6M761.33 10.3V12.6M766.17 10.3V12.6M771.01 10.3V12.6M775.86 10.3V12.6M780.70 10.3V12.6M785.54 10.3V12.6M790.39 10.3V12.6M795.23 10.3V12.6M800.07 10.3V12.6M809.76 10.3V12.6M814.60 10.3V12.6M819.45 10.3V12.6M824.29 10.3V12.6M829.13 10.3V12.6M833.98 10.3V12.6M838.82 10.3V12.6M843.66 10.3V12.6M848.51 10.3V12.6M858.19 10.3V12.6M863.04 10.3V12.6M867.88 10.3V12.6M872.72 10.3V12.6M877.57 10.3V12.6M882.41 10.3V12.6M887.25 10.3V12.6M892.09 10.3V12.6M896.94 10.3V12.6M906.62 10.3V12.6M911.47 10.3V12.6M916.31 10.3V12.6M921.15 10.3V12.6M926.00 10.3V12.6M930.84 10.3V12.6M935.68 10.3V12.6M940.53 10.3V12.6M945.37 10.3V12.6M955.06 10.3V12.6M959.90 10.3V12.6M964.74 10.3V12.6M969.59 10.3V12.6M974.43 10.3V12.6" stroke="#e0e0e0" stroke-width="0.900" fill="none"/><path d="M13 12.500H976" stroke="#dcdcdc" stroke-width="1" fill="none"/><path d="M13.2 12V629" stroke="#c4c4c4" stroke-width="1.4" fill="none"/><path d="M1.600 58.00H13M1.600 106.43H13M1.600 154.86H13M1.600 203.30H13M1.600 251.73H13M1.600 300.16H13M1.600 348.59H13M1.600 397.03H13M1.600 445.46H13M1.600 493.89H13M1.600 542.32H13M1.600 590.76H13" stroke="#d6d6d6" stroke-width="1" fill="none"/><path d="M10.7 62.84H13M10.7 67.69H13M10.7 72.53H13M10.7 77.37H13M10.7 82.22H13M10.7 87.06H13M10.7 91.90H13M10.7 96.75H13M10.7 101.59H13M10.7 111.28H13M10.7 116.12H13M10.7 120.96H13M10.7 125.81H13M10.7 130.65H13M10.7 135.49H13M10.7 140.33H13M10.7 145.18H13M10.7 150.02H13M10.7 159.71H13M10.7 164.55H13M10.7 169.39H13M10.7 174.24H13M10.7 179.08H13M10.7 183.92H13M10.7 188.77H13M10.7 193.61H13M10.7 198.45H13M10.7 208.14H13M10.7 212.98H13M10.7 217.83H13M10.7 222.67H13M10.7 227.51H13M10.7 232.36H13M10.7 237.20H13M10.7 242.04H13M10.7 246.89H13M10.7 256.57H13M10.7 261.42H13M10.7 266.26H13M10.7 271.10H13M10.7 275.95H13M10.7 280.79H13M10.7 285.63H13M10.7 290.48H13M10.7 295.32H13M10.7 305.00H13M10.7 309.85H13M10.7 314.69H13M10.7 319.53H13M10.7 324.38H13M10.7 329.22H13M10.7 334.06H13M10.7 338.91H13M10.7 343.75H13M10.7 353.44H13M10.7 358.28H13M10.7 363.12H13M10.7 367.97H13M10.7 372.81H13M10.7 377.65H13M10.7 382.50H13M10.7 387.34H13M10.7 392.18H13M10.7 401.87H13M10.7 406.71H13M10.7 411.56H13M10.7 416.40H13M10.7 421.24H13M10.7 426.09H13M10.7 430.93H13M10.7 435.77H13M10.7 440.62H13M10.7 450.30H13M10.7 455.14H13M10.7 459.99H13M10.7 464.83H13M10.7 469.67H13M10.7 474.52H13M10.7 479.36H13M10.7 484.20H13M10.7 489.05H13M10.7 498.73H13M10.7 503.58H13M10.7 508.42H13M10.7 513.26H13M10.7 518.11H13M10.7 522.95H13M10.7 527.79H13M10.7 532.64H13M10.7 537.48H13M10.7 547.17H13M10.7 552.01H13M10.7 556.85H13M10.7 561.70H13M10.7 566.54H13M10.7 571.38H13M10.7 576.23H13M10.7 581.07H13M10.7 585.91H13M10.7 595.60H13M10.7 600.44H13M10.7 605.28H13M10.7 610.13H13M10.7 614.97H13M10.7 619.81H13M10.7 624.66H13" stroke="#e0e0e0" stroke-width="0.900" fill="none"/><g font-family="Liberation Sans, sans-serif" font-size="8.6" fill="#f4f4f4" stroke="#f4f4f4" stroke-width="0.15"><text x="33.30" y="8.9" textLength="3.5" lengthAdjust="spacingAndGlyphs">0</text><text x="81.73" y="8.9" textLength="10.4" lengthAdjust="spacingAndGlyphs">100</text><text x="130.16" y="8.9" textLength="10.4" lengthAdjust="spacingAndGlyphs">200</text><text x="178.60" y="8.9" textLength="10.4" lengthAdjust="spacingAndGlyphs">300</text><text x="227.03" y="8.9" textLength="10.4" lengthAdjust="spacingAndGlyphs">400</text><text x="275.46" y="8.9" textLength="10.4" lengthAdjust="spacingAndGlyphs">500</text><text x="323.89" y="8.9" textLength="10.4" lengthAdjust="spacingAndGlyphs">600</text><text x="372.33" y="8.9" textLength="10.4" lengthAdjust="spacingAndGlyphs">700</text><text x="420.76" y="8.9" textLength="10.4" lengthAdjust="spacingAndGlyphs">800</text><text x="469.19" y="8.9" textLength="10.4" lengthAdjust="spacingAndGlyphs">900</text><text x="517.62" y="8.9" textLength="13.8" lengthAdjust="spacingAndGlyphs">1000</text><text x="566.06" y="8.9" textLength="13.8" lengthAdjust="spacingAndGlyphs">1100</text><text x="614.49" y="8.9" textLength="13.8" lengthAdjust="spacingAndGlyphs">1200</text><text x="662.92" y="8.9" textLength="13.8" lengthAdjust="spacingAndGlyphs">1300</text><text x="711.35" y="8.9" textLength="13.8" lengthAdjust="spacingAndGlyphs">1400</text><text x="759.78" y="8.9" textLength="13.8" lengthAdjust="spacingAndGlyphs">1500</text><text x="808.22" y="8.9" textLength="13.8" lengthAdjust="spacingAndGlyphs">1600</text><text x="856.65" y="8.9" textLength="13.8" lengthAdjust="spacingAndGlyphs">1700</text><text x="905.08" y="8.9" textLength="13.8" lengthAdjust="spacingAndGlyphs">1800</text><text x="953.51" y="8.9" textLength="13.8" lengthAdjust="spacingAndGlyphs">1900</text><text transform="translate(3.6 60.60) rotate(90)" font-size="8" textLength="4.3" lengthAdjust="spacingAndGlyphs">0</text><text transform="translate(3.6 109.03) rotate(90)" font-size="8" textLength="12.9" lengthAdjust="spacingAndGlyphs">100</text><text transform="translate(3.6 157.46) rotate(90)" font-size="8" textLength="12.9" lengthAdjust="spacingAndGlyphs">200</text><text transform="translate(3.6 205.90) rotate(90)" font-size="8" textLength="12.9" lengthAdjust="spacingAndGlyphs">300</text><text transform="translate(3.6 254.33) rotate(90)" font-size="8" textLength="12.9" lengthAdjust="spacingAndGlyphs">400</text><text transform="translate(3.6 302.76) rotate(90)" font-size="8" textLength="12.9" lengthAdjust="spacingAndGlyphs">500</text><text transform="translate(3.6 351.19) rotate(90)" font-size="8" textLength="12.9" lengthAdjust="spacingAndGlyphs">600</text><text transform="translate(3.6 399.63) rotate(90)" font-size="8" textLength="12.9" lengthAdjust="spacingAndGlyphs">700</text><text transform="translate(3.6 448.06) rotate(90)" font-size="8" textLength="12.9" lengthAdjust="spacingAndGlyphs">800</text><text transform="translate(3.6 496.49) rotate(90)" font-size="8" textLength="12.9" lengthAdjust="spacingAndGlyphs">900</text><text transform="translate(3.6 544.92) rotate(90)" font-size="8" textLength="17.2" lengthAdjust="spacingAndGlyphs">1000</text><text transform="translate(3.6 593.36) rotate(90)" font-size="8" textLength="17.2" lengthAdjust="spacingAndGlyphs">1100</text></g><path d="M897.500 5v1.200M897.500 9.400v1.600" stroke="#e82020" stroke-width="0.900"/><path d="M7.400 419.600h1.200M10.200 419.600h1.400" stroke="#e82020" stroke-width="0.900"/></svg>
<div style="left:214px;top:117px;width:929.9px;height:523.1px;background:#000"></div>
<svg style="left:540px;top:300px" width="240" height="130" viewBox="0 0 240 130"><defs><filter id="sblur" x="-20%" y="-20%" width="140%" height="140%"><feGaussianBlur stdDeviation="1.5"/></filter><linearGradient id="sbody" x1="0" y1="0" x2="0" y2="1"><stop offset="0" stop-color="#57544c"/><stop offset="0.1" stop-color="#8e887a"/><stop offset="0.24" stop-color="#cfc3a4"/><stop offset="0.4" stop-color="#e6d9b9"/><stop offset="0.5" stop-color="#e8cfae"/><stop offset="0.56" stop-color="#dcc3a2"/><stop offset="0.64" stop-color="#f5e9c3"/><stop offset="0.8" stop-color="#ecdfb8"/><stop offset="1" stop-color="#b5a884"/></linearGradient><radialGradient id="slimb" cx="0.52" cy="0.5" r="0.5"><stop offset="0.72" stop-color="#000" stop-opacity="0"/><stop offset="1" stop-color="#000" stop-opacity="0.38"/></radialGradient><linearGradient id="sfar" x1="0" y1="0" x2="0" y2="1"><stop offset="0" stop-color="#000" stop-opacity="0.32"/><stop offset="1" stop-color="#000" stop-opacity="0"/></linearGradient><clipPath id="sfront"><rect x="-90" y="0" width="180" height="60"/></clipPath></defs><g transform="translate(118.8 65.3) rotate(3.2)" filter="url(#sblur)"><g><path d="M-75.50 0A75.50 34.88 0 1 0 75.50 0A75.50 34.88 0 1 0 -75.50 0ZM-68.00 0A68.00 31.42 0 1 0 68.00 0A68.00 31.42 0 1 0 -68.00 0Z" fill="#5f6875" fill-rule="evenodd"/><path d="M-68.00 0A68.00 31.42 0 1 0 68.00 0A68.00 31.42 0 1 0 -68.00 0ZM-65.80 0A65.80 30.40 0 1 0 65.80 0A65.80 30.40 0 1 0 -65.80 0Z" fill="#39414d" fill-rule="evenodd"/><path d="M-65.80 0A65.80 30.40 0 1 0 65.80 0A65.80 30.40 0 1 0 -65.80 0ZM-58.00 0A58.00 26.80 0 1 0 58.00 0A58.00 26.80 0 1 0 -58.00 0Z" fill="#cdcfcc" fill-rule="evenodd"/><path d="M-58.00 0A58.00 26.80 0 1 0 58.00 0A58.00 26.80 0 1 0 -58.00 0ZM-51.00 0A51.00 23.56 0 1 0 51.00 0A51.00 23.56 0 1 0 -51.00 0Z" fill="#aeada6" fill-rule="evenodd"/><path d="M-51.00 0A51.00 23.56 0 1 0 51.00 0A51.00 23.56 0 1 0 -51.00 0ZM-45.00 0A45.00 20.79 0 1 0 45.00 0A45.00 20.79 0 1 0 -45.00 0Z" fill="#1c1a18" fill-rule="evenodd"/></g><rect x="-80" y="-40" width="160" height="40" fill="url(#sfar)"/><ellipse cx="-5.5" cy="-3" rx="33" ry="32" fill="#000" opacity="0.92"/><ellipse cx="0" cy="0" rx="33" ry="32" fill="url(#sbody)"/><ellipse cx="0" cy="0" rx="33" ry="32" fill="url(#slimb)"/><g clip-path="url(#sfront)"><path d="M-75.50 0A75.50 34.88 0 1 0 75.50 0A75.50 34.88 0 1 0 -75.50 0ZM-68.00 0A68.00 31.42 0 1 0 68.00 0A68.00 31.42 0 1 0 -68.00 0Z" fill="#5f6875" fill-rule="evenodd"/><path d="M-68.00 0A68.00 31.42 0 1 0 68.00 0A68.00 31.42 0 1 0 -68.00 0ZM-65.80 0A65.80 30.40 0 1 0 65.80 0A65.80 30.40 0 1 0 -65.80 0Z" fill="#39414d" fill-rule="evenodd"/><path d="M-65.80 0A65.80 30.40 0 1 0 65.80 0A65.80 30.40 0 1 0 -65.80 0ZM-58.00 0A58.00 26.80 0 1 0 58.00 0A58.00 26.80 0 1 0 -58.00 0Z" fill="#cdcfcc" fill-rule="evenodd"/><path d="M-58.00 0A58.00 26.80 0 1 0 58.00 0A58.00 26.80 0 1 0 -58.00 0ZM-51.00 0A51.00 23.56 0 1 0 51.00 0A51.00 23.56 0 1 0 -51.00 0Z" fill="#aeada6" fill-rule="evenodd"/><path d="M-51.00 0A51.00 23.56 0 1 0 51.00 0A51.00 23.56 0 1 0 -51.00 0ZM-45.00 0A45.00 20.79 0 1 0 45.00 0A45.00 20.79 0 1 0 -45.00 0Z" fill="#1c1a18" fill-rule="evenodd"/><path d="M-75.50 0A75.50 34.88 0 1 0 75.50 0A75.50 34.88 0 1 0 -75.50 0ZM-51.00 0A51.00 23.56 0 1 0 51.00 0A51.00 23.56 0 1 0 -51.00 0Z" fill="#000" fill-rule="evenodd" opacity="0.06"/></g></g></svg>
<div style="left:0px;top:688px;width:1160px;height:12px;background:linear-gradient(#41445a 0,#3f4254 3px,#2e2e2e 5px,#2e2e2e 100%)"></div>
<div style="left:184.8px;top:686.3px;width:975.2px;height:0.8px;background:#343434"></div>
<div style="left:184px;top:687.1px;width:976px;height:1px;background:#8e8e8e"></div>
<div style="left:0px;top:687.2px;width:184px;height:1px;background:#5a5a5a"></div>
<span class="t" style="left:3px;top:690.9px;font-size:8.2px;color:#e8e8e8;transform:scaleX(0.806);">GPCMOS02000KPA</span>
<div style="left:617.6px;top:690px;width:0.8px;height:10px;background:#6a6a6a"></div>
<span class="t" style="left:620.8px;top:691.3px;font-size:8.2px;color:#e8e8e8;transform:scaleX(0.837);">Bildrate: 3.9; Einzelbild: 3669</span>
<div style="left:939.2px;top:690px;width:0.8px;height:10px;background:#6a6a6a"></div>
<span class="t" style="left:941.8px;top:691.3px;font-size:8.2px;color:#e8e8e8;transform:scaleX(0.822);">1920 × 1080</span>
<div style="left:1064.2px;top:690px;width:0.8px;height:10px;background:#6a6a6a"></div>
<svg style="left:1068px;top:692px" width="6" height="8" viewBox="0 0 6 8"><circle cx="3" cy="2.400" r="1.500" fill="none" stroke="#1a8ac0" stroke-width="1"/><path d="M1.400 8V6a1.600 1.600 0 0 1 3.200 0v2" fill="#1a8ac0"/></svg>
<div style="left:179px;top:44px;width:5.8px;height:644px;background:#585858"></div>
<div style="left:180.2px;top:44px;width:0.8px;height:644px;background:#8c8c8c"></div>
<div style="left:183px;top:44px;width:0.8px;height:644px;background:#939393"></div>
<div style="left:184px;top:59px;width:0.8px;height:629px;background:#3c3c3c"></div>
<div style="left:0px;top:0px;width:0.9px;height:700px;background:#28387f"></div>
</div>
</body>
</html>
